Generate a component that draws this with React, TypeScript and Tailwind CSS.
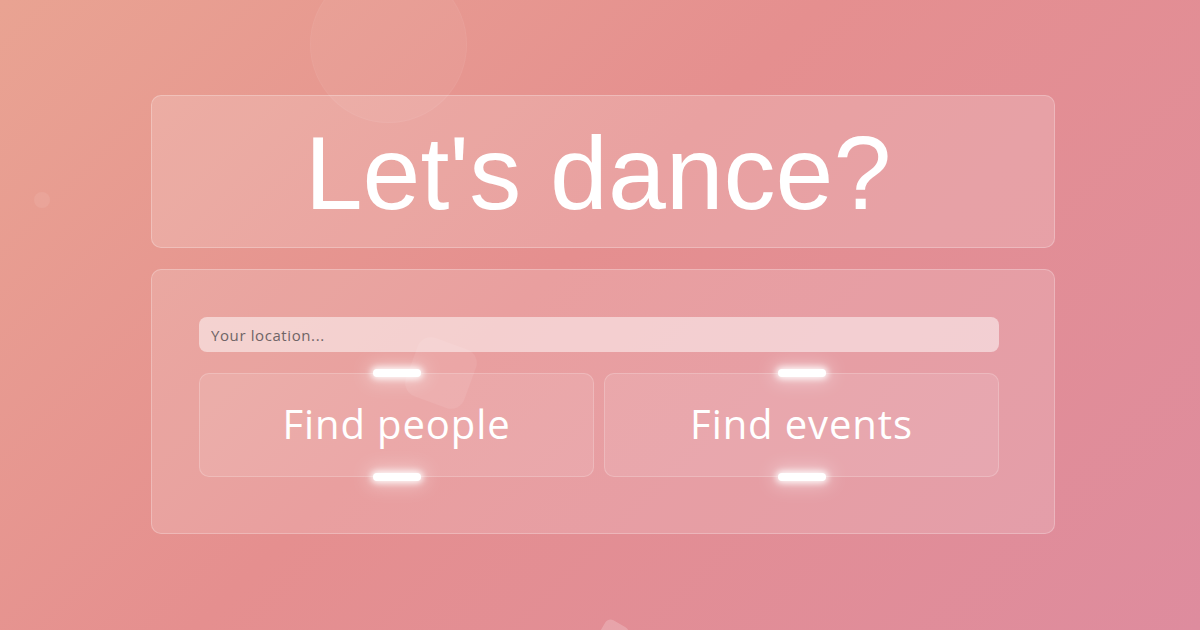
import * as React from 'react';

const Glow: React.FC<{ className: string }> = ({ className }) => (
  <span
    className={`absolute left-1/2 -translate-x-1/2 w-[48px] h-[8px] rounded-full bg-white shadow-[0_0_6px_2px_rgba(255,255,255,0.9),0_0_18px_6px_rgba(255,255,255,0.35)] ${className}`}
  />
);

const ActionButton: React.FC<{ label: string }> = ({ label }) => (
  <button className="relative h-[104px] rounded-[10px] border border-white/20 bg-white/10 text-white text-[40px] font-normal tracking-[0.9px] flex items-center justify-center" style={{ fontFamily: '"Open Sans", "Noto Sans", sans-serif' }}>
    <Glow className="-top-[5px]" />
    <span className="-mt-[3px]">{label}</span>
    <Glow className="-bottom-[5px]" />
  </button>
);

export default function App() {
  return (
    <div className="relative w-[1200px] h-[630px] overflow-hidden bg-[linear-gradient(135deg,#e9a392_0%,#e58f8f_45%,#de8c9e_100%)]">
      {/* backdrop shapes */}
      <div className="absolute left-[310px] -top-[34px] w-[157px] h-[157px] rounded-full bg-white/[0.05] border border-white/[0.04]" />
      <div className="absolute left-[34px] top-[192px] w-[16px] h-[16px] rounded-full bg-white/[0.07]" />
      <div className="absolute left-[600px] top-[622px] w-[26px] h-[26px] rotate-[30deg] rounded-md bg-white/20" />

      <div className="relative flex flex-col items-center pt-[95px] pl-[6px] gap-[21px]">
        {/* title */}
        <div className="w-[904px] h-[153px] rounded-[10px] border border-white/25 bg-white/[0.17] flex items-center justify-center pr-[10px]">
          <h1 className="text-white text-[104px] leading-none mt-[2px]" style={{ fontFamily: '"Liberation Sans", Arial, sans-serif' }}>
            Let's dance?
          </h1>
        </div>

        {/* search */}
        <div className="relative w-[904px] rounded-[10px] border border-white/25 bg-white/[0.15] px-[47px] pt-[47px] pb-[56px]">
          <div className="absolute left-[258px] top-[72px] w-[62px] h-[62px] rotate-[20deg] rounded-[14px] bg-white/[0.07]" />
          <input
            placeholder="Your location..."
            className="relative block w-[800px] h-[35px] rounded-[8px] bg-white/50 px-[12px] text-[15px] tracking-[0.6px] text-[#5f5557] placeholder:text-[#6f6466] outline-none"
            style={{ fontFamily: '"Open Sans", "Noto Sans", sans-serif' }}
          />
          <div className="relative grid grid-cols-2 gap-[10px] mt-[21px] w-[800px]">
            <ActionButton label="Find people" />
            <ActionButton label="Find events" />
          </div>
        </div>
      </div>
    </div>
  );
}
